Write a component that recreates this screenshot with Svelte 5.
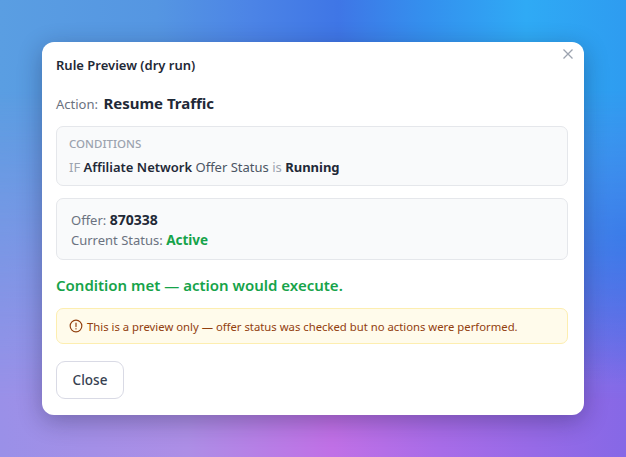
<script>
  const title = "Rule Preview (dry run)";
</script>

<div class="page">
  <div class="modal">
    <button class="x" aria-label="Close">
      <svg width="12" height="12" viewBox="0 0 12 12"><path d="M1.5 1.5l9 9M10.5 1.5l-9 9" stroke="#9ca3af" stroke-width="1.3" fill="none"/></svg>
    </button>
    <h3 class="title">{title}</h3>
    <div class="action"><span class="muted">Action:</span> <strong>Resume Traffic</strong></div>
    <div class="box cond">
      <div class="label">CONDITIONS</div>
      <div class="line"><span class="faint">IF</span> <b>Affiliate Network</b> <span class="mid">Offer Status</span> <span class="faint">is</span> <b class="val">Running</b></div>
    </div>
    <div class="box offer">
      <div class="row"><span class="muted">Offer:</span> <b>870338</b></div>
      <div class="row"><span class="muted">Current Status:</span> <b class="green">Active</b></div>
    </div>
    <div class="result">Condition met — action would execute.</div>
    <div class="note">
      <svg width="14" height="14" viewBox="0 0 24 24" fill="none" stroke="#92400e" stroke-width="2" stroke-linecap="round"><circle cx="12" cy="12" r="10"/><path d="M12 7v6M12 16.5v.5"/></svg>
      <span>This is a preview only — offer status was checked but no actions were performed.</span>
    </div>
    <div><button class="close">Close</button></div>
  </div>
</div>

<style>
  :global(body) { margin: 0; }
  .page {
    position: relative;
    width: 626px; height: 457px; overflow: hidden; box-sizing: border-box;
    padding-top: 42px; padding-left: 42px;
    font-family: "Noto Sans", sans-serif;
    background: linear-gradient(to right, #5a9ee2 0%, #5596e2 25%, #4c84e6 40%, #3f76e6 54%, #3490ee 68%, #2faaf5 84%, #2e9cf0 100%);
  }
  .page::before {
    content: ""; position: absolute; inset: 0;
    background:
      radial-gradient(circle at 626px 235px, #4a58e0 0, rgba(74,88,224,0) 150px),
      linear-gradient(to right, #9a90e8 0%, #ad8ee6 30%, #c070e6 53%, #a86ce8 70%, #8668e6 100%);
    -webkit-mask-image: linear-gradient(to bottom, transparent 90px, #000 400px);
    mask-image: linear-gradient(to bottom, transparent 90px, #000 400px);
  }
  .modal {
    position: relative; box-sizing: border-box; width: 542px; height: 373px;
    background: #fff; border-radius: 12px; padding: 14px 16px 16px 14px;
    box-shadow: 0 6px 24px rgba(20,20,50,.32);
    color: #1f2937;
  }
  .x { position: absolute; top: 6px; right: 10px; border: 0; background: none; padding: 0; width: 12px; height: 12px; line-height: 0; }
  .title { margin: 0; font-size: 13px; font-weight: 600; line-height: 18px; color: #1f2937; }
  .action { margin-top: 20px; height: 20px; font-size: 13px; line-height: 20px; }
  .action strong { margin-left: 2px; font-size: 15px; font-weight: 700; color: #1f2937; line-height: 1; }
  .muted { color: #6b7280; }
  .faint { color: #9ca3af; }
  .mid { color: #4b5563; }
  b { font-weight: 600; }
  .val { font-weight: 700; }
  .box { background: #f9fafb; border: 1px solid #e5e7eb; border-radius: 7px; box-sizing: border-box; }
  .cond { margin-top: 12px; height: 60px; padding: 9px 12px; }
  .label { font-size: 11.5px; font-weight: 500; color: #9ca3af; line-height: 16px; }
  .line { font-size: 13px; line-height: 20px; margin-top: 5px; }
  .offer { margin-top: 12px; height: 62px; padding: 11px 14px; font-size: 13px; }
  .row { height: 20px; line-height: 20px; }
  .offer b { font-size: 14px; font-weight: 700; line-height: 1; }
  .offer b.green { font-size: 13.5px; }
  .green { color: #16a34a; }
  .result { margin-top: 14px; font-size: 15px; font-weight: 600; color: #16a34a; line-height: 22px; }
  .note {
    margin-top: 12px; height: 36px; box-sizing: border-box; display: flex; align-items: center; gap: 4px;
    background: #fffbeb; border: 1px solid #fdeeb0; border-radius: 7px; padding: 0 12px;
    font-size: 11.3px; color: #92400e;
  }
  .close {
    margin-top: 17px; width: 68px; height: 38px; background: #fff; border: 1px solid #d9dae5; border-radius: 9px;
    font: 500 13.5px "Noto Sans", sans-serif; color: #374151;
  }
</style>
